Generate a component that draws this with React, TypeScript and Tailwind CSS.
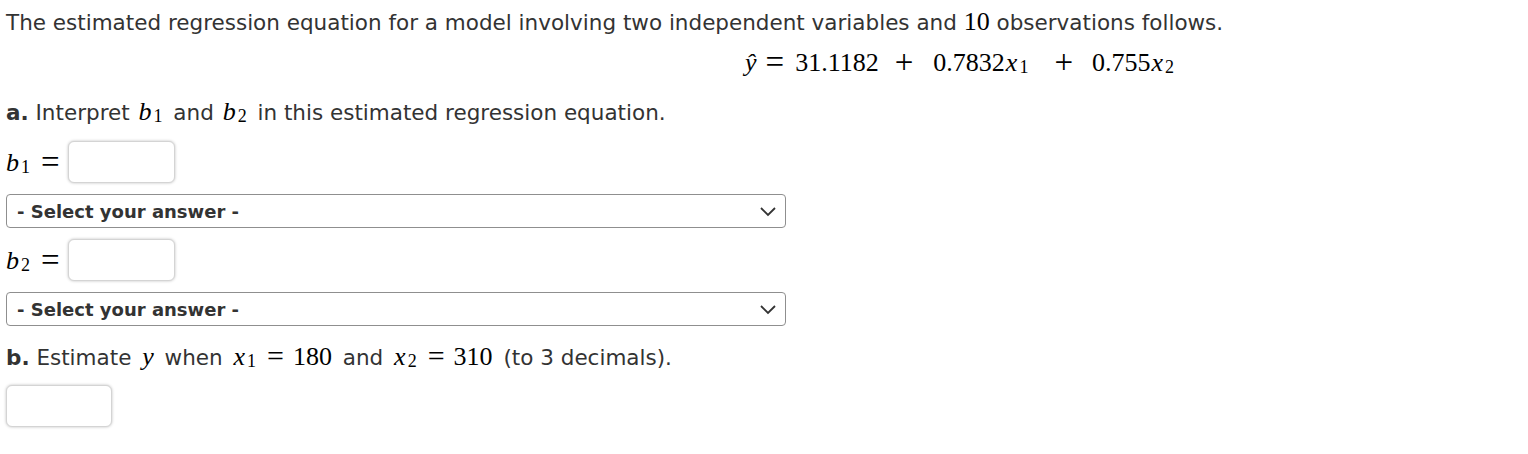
import React from "react";

const math = "font-['Liberation_Serif',serif]";

function Sub({ n }: { n: string }) {
  return <sub className="text-[18px] not-italic relative top-[2px] ml-[2px] mr-[2px]">{n}</sub>;
}

function Var({ v, n, pad = "" }: { v: string; n?: string; pad?: string }) {
  return (
    <span className={`${math} italic text-[26px] text-black ${pad}`}>
      {v}
      {n && <Sub n={n} />}
    </span>
  );
}

function Eq() {
  return <span className={`${math} text-[30px] leading-none text-black mx-[9px] relative top-[1px]`}>=</span>;
}

function NumInput({ w = "w-[107px]" }: { w?: string }) {
  return (
    <div
      className={`${w} h-[42px] bg-white border border-[#d4d4d4] rounded-[6px] shadow-[0_0_3px_rgba(0,0,0,0.25)]`}
    />
  );
}

function SelectBox() {
  return (
    <div className="w-[780px] h-[34px] border border-[#8f8f8f] rounded-[4px] flex items-center justify-between pl-[10px] pr-[8px] bg-white">
      <span className="font-bold text-[18px] text-[#333]">- Select your answer -</span>
      <svg width="18" height="12" viewBox="0 0 18 12" fill="none">
        <path d="M2 3l7 7 7-7" stroke="#333" strokeWidth="1.8" />
      </svg>
    </div>
  );
}

export default function App() {
  return (
    <div className="px-[6px] pt-[8px] font-['DejaVu_Sans',Verdana,sans-serif] text-[21.5px] text-[#333] bg-white min-h-[454px]">
      <p className="h-[28px] leading-[28px] whitespace-nowrap">
        The estimated regression equation for a model involving two independent variables and{" "}
        <span className={`${math} text-[26px] text-black`}>10</span> observations follows.
      </p>

      <div className={`h-[40px] mt-[6px] flex items-center pl-[739px] ${math} text-[26px] text-black whitespace-nowrap`}>
        <span className="italic">ŷ</span>
        <span className="ml-[9px] mr-[11px] text-[33px] leading-none">=</span>
        <span>31.1182</span>
        <span className="ml-[16px] mr-[20px] text-[33px] leading-none">+</span>
        <span>
          0.7832<span className="italic ml-[1px]">x</span>
          <Sub n="1" />
        </span>
        <span className="ml-[24px] mr-[19px] text-[33px] leading-none">+</span>
        <span>
          0.755<span className="italic ml-[1px]">x</span>
          <Sub n="2" />
        </span>
      </div>

      <p className="mt-[15px] h-[30px] leading-[30px] whitespace-nowrap">
        <span className="font-bold">a.</span> Interpret <Var v="b" n="1" pad="mx-[2px]" /> and{" "}
        <Var v="b" n="2" pad="mx-[2px]" /> in this estimated regression equation.
      </p>

      <div className="mt-[14px] flex items-center gap-[8px] h-[42px]">
        <span className="whitespace-nowrap flex items-center">
          <Var v="b" n="1" />
          <span className={`${math} text-[33px] leading-none text-black ml-[9px]`}>=</span>
        </span>
        <NumInput />
      </div>

      <div className="mt-[11px]">
        <SelectBox />
      </div>

      <div className="mt-[11px] flex items-center gap-[8px] h-[42px]">
        <span className="whitespace-nowrap flex items-center">
          <Var v="b" n="2" />
          <span className={`${math} text-[33px] leading-none text-black ml-[9px]`}>=</span>
        </span>
        <NumInput />
      </div>

      <div className="mt-[11px]">
        <SelectBox />
      </div>

      <p className="mt-[14px] h-[32px] leading-[32px] whitespace-nowrap">
        <span className="font-bold">b.</span> Estimate <Var v="y" pad="mx-[4px]" /> when{" "}
        <Var v="x" n="1" pad="ml-[4px]" />
        <Eq />
        <span className={`${math} text-[26px] text-black mr-[4px]`}>180</span> and{" "}
        <Var v="x" n="2" pad="ml-[4px]" />
        <Eq />
        <span className={`${math} text-[26px] text-black mr-[4px]`}>310</span> (to 3 decimals).
      </p>

      <div className="mt-[13px]">
        <NumInput w="w-[106px]" />
      </div>
    </div>
  );
}
